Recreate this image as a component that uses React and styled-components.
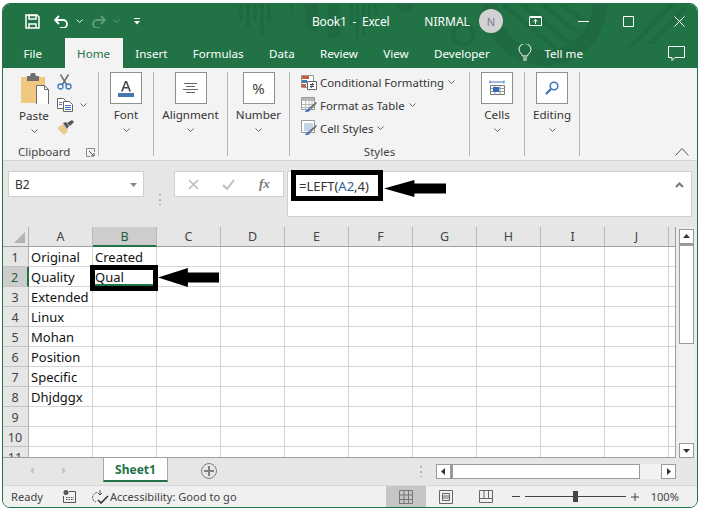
import React from "react";
import styled, { createGlobalStyle } from "styled-components";

const GREEN = "#217346";
const UI_FONT = `"Noto Sans", "Open Sans", sans-serif`;

const GlobalStyle = createGlobalStyle`
  html, body {
    margin: 0;
    background: #fff;
    font-family: ${UI_FONT};
  }
`;

/* ================= WINDOW ================= */

const Page = styled.div`
  position: relative;
  width: 701px;
  height: 511px;
  padding: 3px 0 0 2px;
  box-sizing: border-box;
  overflow: hidden;
`;

const Window = styled.div`
  width: 696px;
  height: 505px;
  box-sizing: border-box;
  border: 1px solid ${GREEN};
  border-radius: 8px;
  overflow: hidden;
  display: flex;
  flex-direction: column;
  background: #e6e6e6;
`;

const Header = styled.div`
  position: relative;
  height: 64px;
  flex: none;
  background: ${GREEN};
  color: #fff;
`;

const Pattern = styled.svg`
  position: absolute;
  left: -3px;
  top: -4px;
`;

const TitleBar = styled.div`
  position: relative;
  height: 34px;
  display: flex;
  align-items: center;
  font-size: 12px;
`;

const TitleIcon = styled.svg`
  flex: none;
  margin-left: ${(p) => p.$ml || 0}px;
`;

const TitleText = styled.span`
  margin-left: ${(p) => p.$ml || 0}px;
  white-space: pre;
  letter-spacing: ${(p) => p.$ls || 0}px;
`;

const Avatar = styled.div`
  width: 24px;
  height: 24px;
  margin-left: 9px;
  border-radius: 50%;
  background: #d2d2d2;
  color: #7a7a95;
  font-size: 11px;
  display: flex;
  align-items: center;
  justify-content: center;
  flex: none;
`;

const TabRow = styled.div`
  position: relative;
  height: 30px;
  display: flex;
  align-items: stretch;
  padding-left: 7px;
  font-size: 11.6px;
  white-space: nowrap;
`;

const RibbonTab = styled.div`
  padding: 0 ${(p) => p.$pad ?? 12.7}px;
  margin-right: ${(p) => p.$mr || 0}px;
  display: flex;
  align-items: center;
  background: ${(p) => (p.$active ? "#f3f3f3" : "transparent")};
  color: ${(p) => (p.$active ? GREEN : "#fff")};
`;

const TellMe = styled.div`
  display: flex;
  align-items: center;
  gap: 12px;
  margin-left: 16px;
`;

const CommentIcon = styled.svg`
  margin-left: 85px;
  align-self: center;
`;

/* ================= RIBBON ================= */

const Ribbon = styled.div`
  position: relative;
  height: 93px;
  flex: none;
  box-sizing: border-box;
  background: #f3f3f3;
  border-bottom: 1px solid #d4d4d4;
  display: flex;
  align-items: flex-start;
  padding-top: 4px;
  font-size: 11.6px;
  color: #333;
`;

const Group = styled.div`
  width: ${(p) => p.$w}px;
  height: 84px;
  box-sizing: border-box;
  border-right: 1px solid #b6b6b6;
  display: flex;
  flex-direction: column;
  align-items: center;
  flex: none;
`;

const BigBox = styled.div`
  width: 32px;
  height: 32px;
  box-sizing: border-box;
  background: #fff;
  border: 1px solid #8f8f8f;
  display: flex;
  align-items: center;
  justify-content: center;
  font-size: 15px;
  color: #444;
`;

const BigLabel = styled.div`
  margin-top: ${(p) => p.$mt ?? 3}px;
  line-height: 16px;
`;

const Chevron = styled.svg`
  display: block;
  flex: none;
  margin-top: ${(p) => p.$mt || 0}px;
  margin-left: ${(p) => p.$ml || 0}px;
`;

const GroupLabel = styled.div`
  margin-top: auto;
  margin-bottom: -2px;
  line-height: 12px;
  font-size: 11.5px;
  color: #444;
`;

const ClipTop = styled.div`
  display: flex;
  width: 100%;
`;

const PasteCol = styled.div`
  width: 32px;
  margin-left: 15px;
  display: flex;
  flex-direction: column;
  align-items: center;
`;

const ClipTools = styled.div`
  margin-left: 7px;
  padding-top: 2px;
  display: flex;
  flex-direction: column;
  gap: 8px;
`;

const ClipToolRow = styled.div`
  display: flex;
  align-items: center;
`;

const ClipFoot = styled.div`
  width: 100%;
  box-sizing: border-box;
  margin-top: auto;
  margin-bottom: -2px;
  padding: 0 3px 0 15px;
  display: flex;
  justify-content: space-between;
  align-items: center;
  line-height: 12px;
  font-size: 11.5px;
  color: #444;
`;

const StyleList = styled.div`
  width: 100%;
  box-sizing: border-box;
  padding: 1px 0 0 11px;
  display: flex;
  flex-direction: column;
  gap: 5px;
`;

const StyleRow = styled.div`
  height: 18px;
  display: flex;
  align-items: center;
  gap: 3px;
  white-space: nowrap;
  font-size: 11.4px;
`;

const Collapse = styled.svg`
  position: absolute;
  right: 8px;
  bottom: 4px;
`;

/* ================= FORMULA BAR ================= */

const FormulaArea = styled.div`
  height: 66px;
  flex: none;
  box-sizing: border-box;
  padding: 10px 5px 0 5px;
  display: flex;
  align-items: flex-start;
  background: #e6e6e6;
`;

const NameBox = styled.div`
  width: 136px;
  height: 26px;
  box-sizing: border-box;
  background: #fff;
  border: 1px solid #cfcfcf;
  padding: 0 6px 0 6px;
  display: flex;
  align-items: center;
  justify-content: space-between;
  font-size: 12px;
  color: #333;
`;

const Grip = styled.div`
  width: 2px;
  height: 11px;
  margin: 0 13px 0 15px;
  align-self: center;
  background: repeating-linear-gradient(#b4b4b4 0 2px, transparent 2px 5px);
`;

const FuncBox = styled.div`
  width: 110px;
  height: 26px;
  box-sizing: border-box;
  background: #fff;
  border: 1px solid #cfcfcf;
  display: flex;
  align-items: center;
  padding-left: 13px;
  gap: 23px;
`;

const FxLabel = styled.span`
  font-family: "Liberation Serif", serif;
  font-style: italic;
  font-weight: 700;
  font-size: 13px;
  color: #777;
  margin-left: 1px;
`;

const FormulaBox = styled.div`
  width: 405px;
  height: 46px;
  margin-left: 3px;
  box-sizing: border-box;
  background: #fff;
  border: 1px solid #cfcfcf;
  padding: 4px 6px 0 11px;
  display: flex;
  justify-content: space-between;
  font-size: 13px;
  line-height: 20px;
  color: #333;
`;

const Ref = styled.span`
  color: #2f5f9e;
`;

const CaretUp = styled.svg`
  margin-top: 6px;
  margin-right: 1px;
`;

/* ================= SHEET ================= */

const Sheet = styled.div`
  height: 231px;
  flex: none;
  display: flex;
  background: #ececec;
`;

const GridWrap = styled.div`
  width: 673px;
  flex: none;
  overflow: hidden;
  box-sizing: border-box;
  border-right: 1px solid #9f9f9f;
  border-bottom: 1px solid #9f9f9f;
  background: #fff;
`;

const GridRow = styled.div`
  display: flex;
  height: ${(p) => p.$h || 20}px;
`;

const Corner = styled.div`
  width: 26px;
  box-sizing: border-box;
  flex: none;
  background: #e6e6e6;
  border-right: 1px solid #b1b1b1;
  border-bottom: 1px solid #9f9f9f;
  display: flex;
  align-items: flex-end;
  justify-content: flex-end;
  padding: 0 3px 3px 0;
`;

const CornerMark = styled.div`
  width: 11px;
  height: 11px;
  background: #b4b4b4;
  clip-path: polygon(100% 0, 100% 100%, 0 100%);
`;

const ColHead = styled.div`
  width: 64px;
  flex: none;
  box-sizing: border-box;
  display: flex;
  align-items: center;
  justify-content: center;
  font-size: 12.5px;
  color: ${(p) => (p.$active ? "#1f5c3a" : "#444")};
  background: ${(p) => (p.$active ? "#cdcdcd" : "#e6e6e6")};
  border-right: 1px solid #b9b9b9;
  border-bottom: ${(p) => (p.$active ? `2px solid ${GREEN}` : "1px solid #9f9f9f")};
`;

const RowHead = styled.div`
  width: 26px;
  flex: none;
  box-sizing: border-box;
  display: flex;
  align-items: center;
  justify-content: center;
  padding: 1px 1px 0 0;
  font-size: 12.5px;
  color: ${(p) => (p.$active ? "#1f5c3a" : "#444")};
  background: ${(p) => (p.$active ? "#cdcdcd" : "#e6e6e6")};
  border-right: ${(p) => (p.$active ? `2px solid ${GREEN}` : "1px solid #b1b1b1")};
  border-bottom: 1px solid #c4c4c4;
`;

const Cell = styled.div`
  width: 64px;
  flex: none;
  box-sizing: border-box;
  border-right: 1px solid #d4d4d4;
  border-bottom: 1px solid #d4d4d4;
  padding: 1px 0 0 2px;
  font-size: 13px;
  line-height: 19px;
  color: #111;
  white-space: nowrap;
  box-shadow: ${(p) => (p.$active ? `inset 0 -2px 0 ${GREEN}` : "none")};
`;

const VScroll = styled.div`
  flex: 1;
  box-sizing: border-box;
  padding: 2px 3px 0 3px;
  display: flex;
  flex-direction: column;
`;

const ScrollBtn = styled.div`
  width: 15px;
  height: 15px;
  flex: none;
  box-sizing: border-box;
  background: #fff;
  border: 1px solid #9a9a9a;
  display: flex;
  align-items: center;
  justify-content: center;
`;

const VThumb = styled.div`
  height: 100px;
  flex: none;
  box-sizing: border-box;
  background: #fff;
  border: 1px solid #9a9a9a;
  border-top-width: 2px;
`;

const VTrack = styled.div`
  flex: 1;
  background: #f2f2f2;
`;

/* ================= SHEET TABS ================= */

const TabBar = styled.div`
  height: 28px;
  flex: none;
  box-sizing: border-box;
  border-bottom: 1px solid #d9d9d9;
  display: flex;
  align-items: flex-start;
  background: #e6e6e6;
`;

const NavArrows = styled.div`
  width: 100px;
  height: 25px;
  flex: none;
  display: flex;
  align-items: center;
  padding-left: 26px;
  box-sizing: border-box;
  gap: 24px;
`;

const SheetTab = styled.div`
  width: 65px;
  height: 24px;
  flex: none;
  box-sizing: border-box;
  background: #fff;
  border-left: 1px solid #a8a8a8;
  border-right: 1px solid #a8a8a8;
  border-bottom: 2px solid ${GREEN};
  color: ${GREEN};
  font-size: 12px;
  font-weight: 700;
  display: flex;
  align-items: center;
  justify-content: center;
`;

const AddSheet = styled.div`
  width: 16px;
  height: 16px;
  margin: 5px 0 0 33px;
  flex: none;
  box-sizing: border-box;
  border: 1px solid #808080;
  border-radius: 50%;
  color: #777;
  display: flex;
  align-items: center;
  justify-content: center;
`;

const TabGrip = styled(Grip)`
  margin: 8px 0 0 203px;
  align-self: flex-start;
`;

const HScroll = styled.div`
  margin: 6px 0 0 14px;
  display: flex;
  width: 240px;
  flex: none;
`;

const HThumb = styled.div`
  width: 189px;
  height: 15px;
  flex: none;
  box-sizing: border-box;
  background: #fff;
  border: 1px solid #9a9a9a;
  border-left-width: 2px;
`;

const HTrack = styled.div`
  flex: 1;
  height: 15px;
  background: #f2f2f2;
`;

/* ================= STATUS BAR ================= */

const StatusBar = styled.div`
  height: 21px;
  flex: none;
  background: #f0f0f0;
  display: flex;
  align-items: center;
  font-size: 11.1px;
  color: #444;
`;

const StatusText = styled.span`
  margin-left: ${(p) => p.$ml || 0}px;
  white-space: nowrap;
`;

const ViewBtn = styled.div`
  width: 40px;
  height: 21px;
  flex: none;
  margin-left: ${(p) => p.$ml || 0}px;
  display: flex;
  align-items: center;
  justify-content: center;
  background: ${(p) => (p.$active ? "#c6c6c6" : "transparent")};
`;

const ZoomTrack = styled.div`
  position: relative;
  width: 101px;
  height: 1px;
  margin: 0 5px;
  background: #444;
  flex: none;
`;

const ZoomThumb = styled.div`
  position: absolute;
  left: 48px;
  top: -5px;
  width: 5px;
  height: 11px;
  background: #444;
`;

/* ================= ANNOTATIONS ================= */

const Callout = styled.div`
  position: absolute;
  left: ${(p) => p.$x}px;
  top: ${(p) => p.$y}px;
  width: ${(p) => p.$w}px;
  height: ${(p) => p.$h}px;
  box-sizing: border-box;
  border: 5px solid #000;
`;

const Arrow = styled.svg`
  position: absolute;
  left: ${(p) => p.$x}px;
  top: ${(p) => p.$y}px;
`;

/* ================= ICONS ================= */

const Chev = ({ mt, ml, color = "#666" }) => (
  <Chevron $mt={mt} $ml={ml} width="7" height="4" viewBox="0 0 7 4" fill="none">
    <path d="M.5.5l3 3 3-3" stroke={color} />
  </Chevron>
);

const PasteIcon = () => (
  <svg width="30" height="32" viewBox="0 0 30 32">
    <path d="M2 5h24v26H2z" fill="#f0c97f" />
    <path d="M8 4h3l1-3h4l1 3h3v5H8z" fill="#6f6f6f" />
    <path d="M17.5 13.500h8l4 4v15h-12z" fill="#fff" stroke="#6b6b6b" />
    <path d="M25.500 13.500v4h4" fill="none" stroke="#6b6b6b" />
  </svg>
);

const CutIcon = () => (
  <svg width="15" height="16" viewBox="0 0 15 16" fill="none">
    <path d="M3.500 .5l6 10M11.500 .5l-6 10" stroke="#6e6e6e" strokeWidth="1.500" />
    <circle cx="3.500" cy="12.500" r="2.500" stroke="#3f78b8" strokeWidth="1.300" />
    <circle cx="11.500" cy="12.500" r="2.500" stroke="#3f78b8" strokeWidth="1.300" />
  </svg>
);

const CopyIcon = () => (
  <svg width="16" height="14" viewBox="0 0 16 14" fill="none">
    <path d="M.5.5h6l2 2v8h-8z" fill="#fff" stroke="#666" />
    <path d="M6.500 3.500h6l3 3v7h-9z" fill="#fff" stroke="#666" />
    <path d="M8 7.500h6M8 9.500h6M8 11.500h6M2 4.500h3M2 6.500h3" stroke="#3f78b8" />
  </svg>
);

const PainterIcon = () => (
  <svg width="17" height="15" viewBox="0 0 17 15">
    <path d="M0 8l6-4 5 7-4 4z" fill="#efc98a" />
    <path d="M6 3l3-1 3 4-2 3z" fill="#555" />
    <path d="M10 3l5-3 2 2-4 4z" fill="#555" />
  </svg>
);

const CondIcon = () => (
  <svg width="16" height="15" viewBox="0 0 16 15" fill="none">
    <path d="M.5.5h12v12H.5z" fill="#fff" stroke="#999" />
    <path d="M1 1h7v3H1z" fill="#d0593b" />
    <path d="M1 5h5v3H1z" fill="#3f78b8" />
    <path d="M1 9h4v3H1z" fill="#d0593b" />
    <path d="M6.500 6.500h9v8h-9z" fill="#fff" stroke="#666" />
    <path d="M9 9.500h4M9 11.500h4M12 8l-2 5" stroke="#444" />
  </svg>
);

const TableIcon = () => (
  <svg width="16" height="16" viewBox="0 0 16 16" fill="none">
    <path d="M.5.5h13v12H.5z" fill="#fff" stroke="#999" />
    <path d="M1 1h12v3H1z" fill="#b9b9b9" />
    <path d="M1 7.500h12M1 10.500h12M4.500 1v11M8 1v11M11 1v11" stroke="#b5b5b5" />
    <path d="M15 5l1 1-6 6-2-1z" fill="#666" />
    <path d="M9 11c1 1.500 0 3.500-3 4-1 0-2 0-2-1 2 0 2-3 5-3z" fill="#3f78b8" />
  </svg>
);

const CellStyleIcon = () => (
  <svg width="16" height="16" viewBox="0 0 16 16" fill="none">
    <path d="M.5.5h13v12H.5z" fill="#fff" stroke="#999" />
    <path d="M3 3h9v8H3z" fill="#c5d5e8" />
    <path d="M15 5l1 1-6 6-2-1z" fill="#666" />
    <path d="M9 11c1 1.500 0 3.500-3 4-1 0-2 0-2-1 2 0 2-3 5-3z" fill="#3f78b8" />
  </svg>
);

const CellsIcon = () => (
  <svg width="16" height="16" viewBox="0 0 16 16" fill="none">
    <path d="M1 2h14M1 .5v3M15 .5v3" stroke="#3f78b8" />
    <path d="M1.500 5.500h14v9h-14z" stroke="#777" />
    <path d="M1.500 8.500h14M1.500 11.500h14M6 5.500v9M11 5.500v9" stroke="#999" />
    <path d="M4 7h6v5H4z" fill="#2f6db5" />
  </svg>
);

const Lens = () => (
  <svg width="14" height="14" viewBox="0 0 14 14" fill="none">
    <circle cx="9" cy="5" r="3.800" stroke="#3f78b8" strokeWidth="1.600" />
    <path d="M6 8l-5 5" stroke="#3f78b8" strokeWidth="2.400" />
  </svg>
);

const BigArrow = ({ x, y, head, len }) => {
  const mid = head / 2;
  return (
    <Arrow $x={x} $y={y} width={len} height={head} viewBox={`0 0 ${len} ${head}`}>
      <path
        d={`M0 ${mid}L${len * 0.49} 0V${mid - 5}H${len}V${mid + 5}H${len * 0.49}V${head}z`}
        fill="#000"
      />
    </Arrow>
  );
};

const Tri = ({ dir, color = "#333", size = 7 }) => {
  const paths = { up: "M0 5L3.500 1 7 5z", down: "M0 2h7L3.500 6z", left: "M5 0v7L1 3.500z", right: "M2 0v7l4-3.500z" };
  return (
    <svg width={size} height={size} viewBox="0 0 7 7">
      <path d={paths[dir]} fill={color} />
    </svg>
  );
};

/* ================= DATA ================= */

const COLUMNS = ["A", "B", "C", "D", "E", "F", "G", "H", "I", "J", ""];
const COLUMN_A = ["Original", "Quality", "Extended", "Linux", "Mohan", "Position", "Specific", "Dhjdggx"];
const ROWS = [1, 2, 3, 4, 5, 6, 7, 8, 9, 10, 11];

const cellText = (row, col) => {
  if (col === "A") return COLUMN_A[row - 1] || "";
  if (col === "B" && row === 1) return "Created";
  if (col === "B" && row === 2) return "Qual";
  return "";
};

const RIBBON_TABS = [
  { label: "File", pad: 13.5, mr: 9 },
  { label: "Home", pad: 12.5, active: true },
  { label: "Insert" },
  { label: "Formulas" },
  { label: "Data" },
  { label: "Review" },
  { label: "View" },
  { label: "Developer" },
];

const App = () => {
  return (
    <Page>
      <GlobalStyle />
      <Window>
        <Header>
          <Pattern width="701" height="68" viewBox="0 0 701 68" fill="#1f6a41">
            <path d="M239 3h4v17h-4zM246 3h4v24h-4zM253 3h4v17h-4zM260 3h4v32h-4zM267 3h4v19h-4z" />
            <path d="M288 3h5v13zM305 3h13v31l-13-8zM328 3h12v35h-12z" />
            <path d="M350 3h3v22h-3zM356 3h3v36h-3zM362 3h3v32h-3zM368 3h3v20h-3zM374 3h3v12h-3z" />
            <path d="M396 3h18a9 9 0 0 1-18 0z" />
            <circle cx="463" cy="34" r="10" fill="none" stroke="#1f6a41" strokeWidth="5" />
            <circle cx="545" cy="3" r="55" fill="none" stroke="#1f6a41" strokeWidth="15" />
            <path d="M505 3l60 50h-7l-60-50zM525 3l50 42h-7l-50-42zM545 3l36 30h-7l-36-30zM565 3l20 17h-7l-20-17z" />
            <path d="M627 47l43-44h7l-43 44zM647 44l36-38 4 3-33 35z" />
          </Pattern>
          <TitleBar>
            <TitleIcon $ml={22} width="15" height="15" viewBox="0 0 15 15" fill="none">
              <path d="M1 1h11l2 2v11H1z" stroke="#fff" strokeWidth="1.500" />
              <path d="M4 1.500h7v3.500H4zM4 14v-4h7v4" stroke="#fff" strokeWidth="1.500" />
            </TitleIcon>
            <TitleIcon $ml={14} width="15" height="13" viewBox="0 0 15 13" fill="none">
              <path d="M5 1L1 5l4 4" stroke="#fff" strokeWidth="1.800" />
              <path d="M1 5h8a4 4 0 0 1 0 8H6" stroke="#fff" strokeWidth="1.800" />
            </TitleIcon>
            <Chev ml={7} color="#dfe" />
            <TitleIcon $ml={8} width="15" height="13" viewBox="0 0 15 13" fill="none">
              <path d="M10 1l4 4-4 4" stroke="#5f9c7c" strokeWidth="1.800" />
              <path d="M14 5H6a4 4 0 0 0 0 8h3" stroke="#5f9c7c" strokeWidth="1.800" />
            </TitleIcon>
            <Chev ml={7} color="#5f9c7c" />
            <TitleIcon $ml={14} width="6" height="7" viewBox="0 0 6 7">
              <path d="M0 0h6v1H0zM0 3h6L3 6.500z" fill="#fff" />
            </TitleIcon>
            <TitleText $ml={172} $ls={-0.2}>Book1  -  Excel</TitleText>
            <TitleText $ml={35}>NIRMAL</TitleText>
            <Avatar>N</Avatar>
            <TitleIcon $ml={26} width="13" height="10" viewBox="0 0 13 10" fill="none">
              <path d="M.5 1.500h12v8H.5z" stroke="#fff" />
              <path d="M.5.5h12" stroke="#fff" />
              <path d="M6.500 8V3.500M4.500 5.500l2-2 2 2" stroke="#fff" />
            </TitleIcon>
            <TitleIcon $ml={36} width="11" height="1" viewBox="0 0 11 1">
              <path d="M0 0h11v1H0z" fill="#fff" />
            </TitleIcon>
            <TitleIcon $ml={34} width="11" height="11" viewBox="0 0 11 11" fill="none">
              <path d="M.5.5h10v10H.5z" stroke="#fff" />
            </TitleIcon>
            <TitleIcon $ml={40} width="11" height="11" viewBox="0 0 11 11" fill="none">
              <path d="M.5.5l10 10M10.500.5l-10 10" stroke="#fff" />
            </TitleIcon>
          </TitleBar>
          <TabRow>
            {RIBBON_TABS.map((tab) => (
              <RibbonTab key={tab.label} $active={tab.active} $pad={tab.pad} $mr={tab.mr}>
                {tab.label}
              </RibbonTab>
            ))}
            <TellMe>
              <svg width="14" height="18" viewBox="0 0 14 18" fill="none">
                <path d="M4.500 12C4 9.500 1 8.500 1 5.500a6 6 0 0 1 12 0c0 3-3 4-3.500 6.500z" stroke="#fff" />
                <path d="M5 14h4M5 16h4" stroke="#fff" />
              </svg>
              <span>Tell me</span>
            </TellMe>
            <CommentIcon width="17" height="15" viewBox="0 0 17 15" fill="none">
              <path d="M.5.5h16v11H7L4 14.500v-3H.5z" stroke="#fff" />
            </CommentIcon>
          </TabRow>
        </Header>

        <Ribbon>
          <Group $w={96}>
            <ClipTop>
              <PasteCol>
                <PasteIcon />
                <BigLabel $mt={4}>Paste</BigLabel>
                <Chev mt={5} />
              </PasteCol>
              <ClipTools>
                <CutIcon />
                <ClipToolRow>
                  <CopyIcon />
                  <Chev ml={7} />
                </ClipToolRow>
                <PainterIcon />
              </ClipTools>
            </ClipTop>
            <ClipFoot>
              <span>Clipboard</span>
              <svg width="9" height="9" viewBox="0 0 9 9" fill="none">
                <path d="M8.500 4V.5H.5v8H4" stroke="#888" />
                <path d="M3 3l5 5M8 5v3H5" stroke="#555" />
              </svg>
            </ClipFoot>
          </Group>

          <Group $w={55}>
            <BigBox>
              <svg width="16" height="17" viewBox="0 0 16 17">
                <path d="M7 1h2l4 10.500h-1.800l-1-3H5.800l-1 3H3zM6.300 7h3.400L8 2.500z" fill="#444" />
                <path d="M0 13h16v4H0z" fill="#4a74b0" />
              </svg>
            </BigBox>
            <BigLabel>Font</BigLabel>
            <Chev mt={5} />
          </Group>

          <Group $w={74}>
            <BigBox>
              <svg width="15" height="11" viewBox="0 0 15 11" fill="none">
                <path d="M1 .5h13M3 3.500h9M0 6.500h15M3 9.500h9" stroke="#666" />
              </svg>
            </BigBox>
            <BigLabel>Alignment</BigLabel>
            <Chev mt={5} />
          </Group>

          <Group $w={62}>
            <BigBox>%</BigBox>
            <BigLabel>Number</BigLabel>
            <Chev mt={5} />
          </Group>

          <Group $w={180}>
            <StyleList>
              <StyleRow>
                <CondIcon />
                <span>Conditional Formatting</span>
                <Chev ml={1} />
              </StyleRow>
              <StyleRow>
                <TableIcon />
                <span>Format as Table</span>
                <Chev ml={1} />
              </StyleRow>
              <StyleRow>
                <CellStyleIcon />
                <span>Cell Styles</span>
                <Chev ml={1} />
              </StyleRow>
            </StyleList>
            <GroupLabel>Styles</GroupLabel>
          </Group>

          <Group $w={55}>
            <BigBox>
              <CellsIcon />
            </BigBox>
            <BigLabel>Cells</BigLabel>
            <Chev mt={5} />
          </Group>

          <Group $w={55}>
            <BigBox>
              <Lens />
            </BigBox>
            <BigLabel>Editing</BigLabel>
            <Chev mt={5} />
          </Group>

          <Collapse width="14" height="8" viewBox="0 0 14 8" fill="none">
            <path d="M.5 7.500l6.500-7 6.500 7" stroke="#555" />
          </Collapse>
        </Ribbon>

        <FormulaArea>
          <NameBox>
            <span>B2</span>
            <Tri dir="down" color="#888" />
          </NameBox>
          <Grip />
          <FuncBox>
            <svg width="11" height="11" viewBox="0 0 11 11" fill="none">
              <path d="M1 1l9 9M10 1l-9 9" stroke="#bbb" strokeWidth="1.500" />
            </svg>
            <svg width="13" height="11" viewBox="0 0 13 11" fill="none">
              <path d="M1 6l4 4 7-9" stroke="#bbb" strokeWidth="1.800" />
            </svg>
            <FxLabel>fx</FxLabel>
          </FuncBox>
          <FormulaBox>
            <span>
              =LEFT(<Ref>A2</Ref>,4)
            </span>
            <CaretUp width="9" height="6" viewBox="0 0 9 6" fill="none">
              <path d="M1 5l3.500-3.500L8 5" stroke="#777" strokeWidth="2" />
            </CaretUp>
          </FormulaBox>
        </FormulaArea>

        <Sheet>
          <GridWrap>
            <GridRow>
              <Corner>
                <CornerMark />
              </Corner>
              {COLUMNS.map((col) => (
                <ColHead key={col || "K"} $active={col === "B"}>
                  {col}
                </ColHead>
              ))}
            </GridRow>
            {ROWS.map((row) => (
              <GridRow key={row}>
                <RowHead $active={row === 2}>{row}</RowHead>
                {COLUMNS.map((col) => (
                  <Cell key={col || "K"} $active={row === 2 && col === "B"}>
                    {cellText(row, col)}
                  </Cell>
                ))}
              </GridRow>
            ))}
          </GridWrap>
          <VScroll>
            <ScrollBtn>
              <Tri dir="up" />
            </ScrollBtn>
            <VThumb />
            <VTrack />
            <ScrollBtn>
              <Tri dir="down" />
            </ScrollBtn>
          </VScroll>
        </Sheet>

        <TabBar>
          <NavArrows>
            <Tri dir="left" color="#c4c4c4" />
            <Tri dir="right" color="#c4c4c4" />
          </NavArrows>
          <SheetTab>Sheet1</SheetTab>
          <AddSheet>
            <svg width="10" height="10" viewBox="0 0 10 10">
              <path d="M4 0h2v4h4v2H6v4H4V6H0V4h4z" fill="#808080" />
            </svg>
          </AddSheet>
          <TabGrip />
          <HScroll>
            <ScrollBtn>
              <Tri dir="left" />
            </ScrollBtn>
            <HThumb />
            <HTrack />
            <ScrollBtn>
              <Tri dir="right" />
            </ScrollBtn>
          </HScroll>
        </TabBar>

        <StatusBar>
          <StatusText $ml={8}>Ready</StatusText>
          <TitleIcon $ml={20} width="13" height="13" viewBox="0 0 13 13" fill="none">
            <circle cx="3" cy="2.500" r="2.500" fill="#555" />
            <path d="M6 1.500h6.500v11H.5V6" stroke="#555" />
            <path d="M3 7.500h8M3 9.500h8" stroke="#555" strokeDasharray="1.500 1" />
          </TitleIcon>
          <TitleIcon $ml={16} width="17" height="14" viewBox="0 0 17 14" fill="none">
            <path d="M5 2.500A5 5 0 0 0 2 11l2 1" stroke="#555" strokeDasharray="2 1" />
            <path d="M8 0v5M6 3l2 2 2-2" stroke="#555" />
            <path d="M6 10l3 3 7-7" stroke="#333" strokeWidth="1.600" />
          </TitleIcon>
          <StatusText $ml={1}>Accessibility: Good to go</StatusText>
          <ViewBtn $ml={149} $active>
            <svg width="14" height="14" viewBox="0 0 14 14" fill="none">
              <path d="M.5.5h13v13H.5zM.5 5h13M.5 9.500h13M5 .5v13M9.500.5v13" stroke="#777" />
            </svg>
          </ViewBtn>
          <ViewBtn>
            <svg width="14" height="14" viewBox="0 0 14 14" fill="none">
              <path d="M.5.5h13v13H.5z" stroke="#666" />
              <path d="M3.500 3.500h7v7h-7zM3.500 6h7M3.500 8h7" stroke="#666" />
            </svg>
          </ViewBtn>
          <ViewBtn>
            <svg width="14" height="13" viewBox="0 0 14 13" fill="none">
              <path d="M.5.5h13v12H.5zM.5 8.500h13M5 .5v8M9.500.5v8" stroke="#666" />
            </svg>
          </ViewBtn>
          <TitleIcon $ml={6} width="8" height="1" viewBox="0 0 8 1">
            <path d="M0 0h8v1H0z" fill="#444" />
          </TitleIcon>
          <ZoomTrack>
            <ZoomThumb />
          </ZoomTrack>
          <TitleIcon width="8" height="8" viewBox="0 0 8 8">
            <path d="M0 3.500h8v1H0zM3.500 0h1v8h-1z" fill="#444" />
          </TitleIcon>
          <StatusText $ml={12}>100%</StatusText>
        </StatusBar>
      </Window>

      <Callout $x={291} $y={170} $w={92} $h={31} />
      <BigArrow x={384} y={180} head={17} len={62} />
      <Callout $x={90} $y={265} $w={68} $h={26} />
      <BigArrow x={158} y={268} head={19} len={61} />
    </Page>
  );
};

export default App;
